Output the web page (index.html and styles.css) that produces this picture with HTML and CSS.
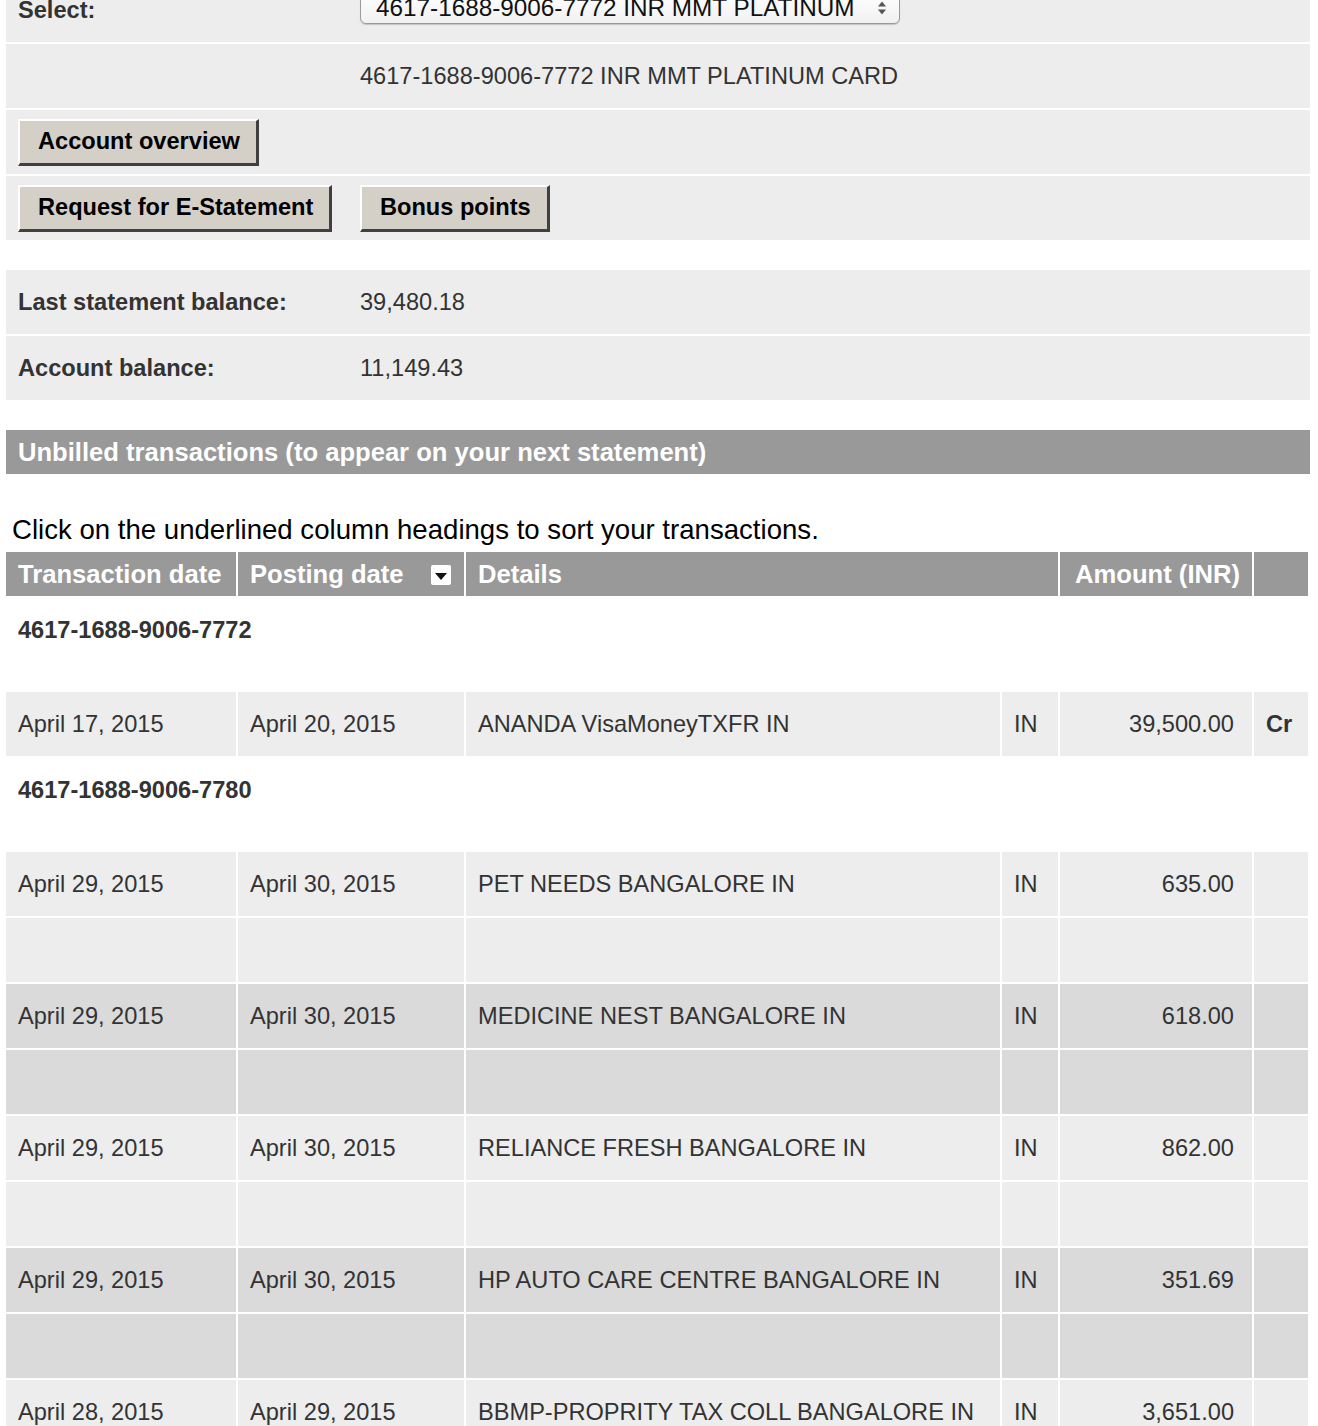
FILE: index.html
```html
<!DOCTYPE html>
<html lang="en">
<head>
<meta charset="utf-8">
<title>Card account</title>
<link rel="stylesheet" href="styles.css">
</head>
<body>
<div class="page">
  <div class="panel">
    <div class="prow">
      <div class="plabel">Select:</div>
      <div class="pval">
        <div class="select">
          <span class="select-text">4617-1688-9006-7772 INR MMT PLATINUM</span>
          <svg class="select-arrows" width="10" height="16" viewBox="0 0 10 16"><path d="M1 6.5L5 1.5L9 6.5Z" fill="#555"/><path d="M1 9.5L5 14.5L9 9.5Z" fill="#555"/></svg>
        </div>
      </div>
    </div>
    <div class="prow">
      <div class="plabel"></div>
      <div class="pval">4617-1688-9006-7772 INR MMT PLATINUM CARD</div>
    </div>
    <div class="prow">
      <div class="plabel"><button class="btn">Account overview</button></div>
      <div class="pval"></div>
    </div>
    <div class="prow">
      <div class="plabel"><button class="btn">Request for E-Statement</button></div>
      <div class="pval"><button class="btn">Bonus points</button></div>
    </div>
  </div>

  <div class="panel balances">
    <div class="prow">
      <div class="plabel">Last statement balance:</div>
      <div class="pval">39,480.18</div>
    </div>
    <div class="prow">
      <div class="plabel">Account balance:</div>
      <div class="pval">11,149.43</div>
    </div>
  </div>

  <div class="section-head">Unbilled transactions (to appear on your next statement)</div>

  <p class="hint">Click on the underlined column headings to sort your transactions.</p>

  <table class="tx">
    <colgroup>
      <col class="c-tdate">
      <col class="c-pdate">
      <col class="c-details">
      <col class="c-country">
      <col class="c-amount">
      <col class="c-crdr">
    </colgroup>
    <thead>
      <tr>
        <th>Transaction date</th>
        <th><div class="sorthead"><span>Posting date</span><svg class="sort-icon" width="20" height="20" viewBox="0 0 20 20"><rect x="0" y="0" width="20" height="20" rx="2" fill="#fff"/><path d="M4 8H16L10 15Z" fill="#111"/></svg></div></th>
        <th colspan="2">Details</th>
        <th class="amt">Amount (INR)</th>
        <th></th>
      </tr>
    </thead>
    <tbody>
      <tr class="group"><td colspan="6">4617-1688-9006-7772</td></tr>
      <tr class="spacer"><td colspan="6"></td></tr>
      <tr class="light">
        <td>April 17, 2015</td><td>April 20, 2015</td><td>ANANDA VisaMoneyTXFR IN</td><td>IN</td><td class="amt">39,500.00</td><td class="crdr">Cr</td>
      </tr>
      <tr class="group"><td colspan="6">4617-1688-9006-7780</td></tr>
      <tr class="spacer"><td colspan="6"></td></tr>
      <tr class="light">
        <td>April 29, 2015</td><td>April 30, 2015</td><td>PET NEEDS BANGALORE IN</td><td>IN</td><td class="amt">635.00</td><td class="crdr"></td>
      </tr>
      <tr class="light blank"><td></td><td></td><td></td><td></td><td></td><td></td></tr>
      <tr class="dark">
        <td>April 29, 2015</td><td>April 30, 2015</td><td>MEDICINE NEST BANGALORE IN</td><td>IN</td><td class="amt">618.00</td><td class="crdr"></td>
      </tr>
      <tr class="dark blank"><td></td><td></td><td></td><td></td><td></td><td></td></tr>
      <tr class="light">
        <td>April 29, 2015</td><td>April 30, 2015</td><td>RELIANCE FRESH BANGALORE IN</td><td>IN</td><td class="amt">862.00</td><td class="crdr"></td>
      </tr>
      <tr class="light blank"><td></td><td></td><td></td><td></td><td></td><td></td></tr>
      <tr class="dark">
        <td>April 29, 2015</td><td>April 30, 2015</td><td>HP AUTO CARE CENTRE BANGALORE IN</td><td>IN</td><td class="amt">351.69</td><td class="crdr"></td>
      </tr>
      <tr class="dark blank"><td></td><td></td><td></td><td></td><td></td><td></td></tr>
      <tr class="light">
        <td>April 28, 2015</td><td>April 29, 2015</td><td>BBMP-PROPRITY TAX COLL BANGALORE IN</td><td>IN</td><td class="amt">3,651.00</td><td class="crdr"></td>
      </tr>
      <tr class="light blank"><td></td><td></td><td></td><td></td><td></td><td></td></tr>
    </tbody>
  </table>
</div>
</body>
</html>
```

FILE: styles.css
```css
* { box-sizing: border-box; }

html, body {
  margin: 0;
  padding: 0;
  background: #fff;
}

body {
  font-family: "Liberation Sans", Arial, Helvetica, sans-serif;
  font-size: 23.6px;
  color: #333;
}

.page {
  margin: -22px 8px 0 6px;
}

.panel {
  display: flex;
  flex-direction: column;
  gap: 2px;
}

.panel.balances {
  margin-top: 30px;
}

.prow {
  display: grid;
  grid-template-columns: 342px 1fr;
  height: 64px;
  background: #ededed;
}

.plabel,
.pval {
  display: flex;
  align-items: center;
  padding: 0 12px;
  white-space: nowrap;
}

.plabel {
  font-weight: bold;
}

.select {
  display: flex;
  align-items: center;
  justify-content: space-between;
  width: 540px;
  height: 32px;
  margin-bottom: 5px;
  padding: 0 12px 0 15px;
  border: 1px solid #9a9a9a;
  border-radius: 6px;
  background: linear-gradient(#ffffff, #f1f1f1);
  box-shadow: 0 1px 1px rgba(0, 0, 0, 0.18);
  color: #111;
  font-weight: normal;
}

.select-text {
  font-size: 24.3px;
}

.btn {
  height: 47px;
  padding: 0 16px 0 18px;
  font-family: "Liberation Sans", Arial, Helvetica, sans-serif;
  font-size: 23.6px;
  font-weight: bold;
  color: #000;
  background: #d4d0c8;
  border-style: solid;
  border-width: 2px 3px 3px 2px;
  border-color: #ffffff #404040 #404040 #ffffff;
  border-radius: 0;
}

.section-head {
  margin-top: 30px;
  height: 44px;
  display: flex;
  align-items: center;
  padding: 0 12px;
  background: #999999;
  color: #fff;
  font-size: 25.6px;
  font-weight: bold;
}

.hint {
  margin: 40px 0 4px 6px;
  line-height: 32px;
  font-size: 27.6px;
  color: #000;
}

.tx {
  width: 1306px;
  margin-left: -2px;
  table-layout: fixed;
  border-collapse: separate;
  border-spacing: 2px;
}

.c-tdate { width: 230px; }
.c-pdate { width: 226px; }
.c-details { width: 534px; }
.c-country { width: 56px; }
.c-amount { width: 192px; }
.c-crdr { width: 54px; }

.tx th {
  height: 44px;
  padding: 0 12px;
  background: #999999;
  color: #fff;
  font-size: 25.6px;
  font-weight: bold;
  text-align: left;
  white-space: nowrap;
}

.tx th.amt {
  text-align: right;
  padding-right: 12px;
}

.sorthead {
  display: flex;
  align-items: center;
  justify-content: space-between;
}

.sort-icon {
  display: block;
  margin-right: 1px;
  margin-top: 2px;
}

.tx td {
  padding: 0 12px;
  white-space: nowrap;
  vertical-align: middle;
}

.tx tr.light td { background: #ededed; }
.tx tr.dark td { background: #dadada; }

.tx tr.light,
.tx tr.dark,
.tx tr.group { height: 64px; }

.tx tr.spacer { height: 26px; }

.tx tr.group td {
  font-weight: bold;
  background: transparent;
}

.tx td.amt {
  text-align: right;
  padding-right: 18px;
}

.tx td.crdr {
  font-weight: bold;
}
```
